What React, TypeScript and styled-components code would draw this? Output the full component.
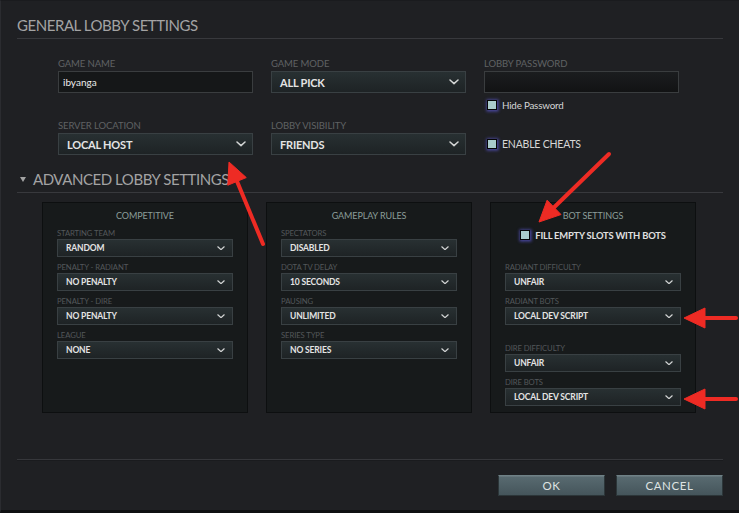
import * as React from "react";
import styled, { createGlobalStyle } from "styled-components";

const appFont = `Lato, "Noto Sans", "DejaVu Sans", sans-serif`;

const Colors = {
  Page: "#1f2023",
  Line: "#38393d",
  Heading: "#a3a3a3",
  Label: "#5f6264",
  PanelLabel: "#53575a",
  PanelTitle: "#8b9d99",
  PanelBg: "#171a1b",
  PanelBorder: "#0d0f10",
  Text: "#e4e4e4",
  Arrow: "#ee2b24",
};

const GlobalStyle = createGlobalStyle`
  html, body {
    margin: 0;
    padding: 0;
    background: ${Colors.Page};
  }
  * {
    box-sizing: border-box;
  }
`;

const Frame = styled.div`
  position: relative;
  width: 739px;
  height: 513px;
  overflow: hidden;
  background: ${Colors.Page};
  border-left: 1px solid #2b2c30;
  border-top: 1px solid #1a1b1e;
  border-bottom: 3px solid #0f1012;
  padding: 0 16px 0 16px;
  font-family: ${appFont};
  color: ${Colors.Text};
`;

const SectionHeader = styled.div<{ $top: number }>`
  display: flex;
  align-items: center;
  margin-top: ${({ $top }) => $top}px;
  height: 28px;
  font-size: 15px;
  letter-spacing: -0.45px;
  color: ${Colors.Heading};
  border-bottom: 1px solid ${Colors.Line};
  white-space: nowrap;
`;

const Triangle = styled.span`
  width: 0;
  height: 0;
  margin: 1px 7px 0 3px;
  border-left: 3.5px solid transparent;
  border-right: 3.5px solid transparent;
  border-top: 5px solid ${Colors.Heading};
`;

const GeneralGrid = styled.div`
  display: grid;
  grid-template-columns: repeat(3, 195px);
  column-gap: 18px;
  margin-top: 19px;
  padding-left: 41px;
`;

const FieldColumn = styled.div`
  display: flex;
  flex-direction: column;
`;

const Field = styled.div<{ $top?: number }>`
  display: flex;
  flex-direction: column;
  margin-top: ${({ $top }) => $top || 0}px;
`;

const FieldLabel = styled.label`
  font-size: 9.5px;
  line-height: 12px;
  height: 12px;
  margin-bottom: 1px;
  color: ${Colors.Label};
  letter-spacing: -0.1px;
  text-transform: uppercase;
  white-space: nowrap;
`;

const TextInput = styled.div<{ $shaded?: boolean }>`
  height: 22px;
  padding: 0 4px;
  display: flex;
  align-items: center;
  font-size: 10px;
  color: #ececec;
  border: 1px solid #3a3d3f;
  background: ${({ $shaded }) =>
    $shaded ? "linear-gradient(#1b1d1f, #121314)" : "#151718"};
`;

const SelectBox = styled.div<{ $compact?: boolean }>`
  display: flex;
  align-items: center;
  justify-content: space-between;
  height: ${({ $compact }) => ($compact ? 18 : 22)}px;
  padding: ${({ $compact }) => ($compact ? "0 7px 0 8px" : "0 6px 0 8px")};
  border: 1px solid #394043;
  background: linear-gradient(#283032, #1e2325);
  font-size: ${({ $compact }) => ($compact ? 8.5 : 11)}px;
  font-weight: 700;
  letter-spacing: ${({ $compact }) => ($compact ? -0.15 : -0.2)}px;
  color: ${Colors.Text};
  white-space: nowrap;
`;

const Chevron = ({ width }: { width: number }) => (
  <svg width={width} height={width * 0.55} viewBox="0 0 10 5.5">
    <polyline
      points="1,1 5,4.6 9,1"
      fill="none"
      stroke="#d4d6d6"
      strokeWidth="1.5"
      strokeLinecap="round"
      strokeLinejoin="round"
    />
  </svg>
);

const Select = ({ value, compact }: { value: string; compact?: boolean }) => (
  <SelectBox $compact={compact}>
    <span>{value}</span>
    <Chevron width={compact ? 8 : 10} />
  </SelectBox>
);

const CheckRow = styled.div<{ $top: number; $height: number; $center?: boolean }>`
  display: flex;
  align-items: center;
  justify-content: ${({ $center }) => ($center ? "center" : "flex-start")};
  margin-top: ${({ $top }) => $top}px;
  height: ${({ $height }) => $height}px;
  padding-left: ${({ $center }) => ($center ? 0 : 3)}px;
  gap: 5px;
  white-space: nowrap;
`;

const CheckBox = styled.span`
  width: 10px;
  height: 10px;
  flex: none;
  background: #a9cbcb;
  border: 1.5px solid #050506;
  box-shadow: 0 0 3px 1.5px rgba(92, 88, 210, 0.75);
`;

const CheckText = styled.span<{ $bold?: boolean; $size: number }>`
  font-size: ${({ $size }) => $size}px;
  font-weight: ${({ $bold }) => ($bold ? 700 : 400)};
  letter-spacing: -0.2px;
  color: ${({ $bold }) => ($bold ? "#e0e0e0" : "#d6d6d6")};
`;

const PanelsRow = styled.div`
  display: grid;
  grid-template-columns: repeat(3, 206px);
  column-gap: 18px;
  margin-top: 9px;
  padding-left: 25px;
`;

const Panel = styled.section`
  display: flex;
  flex-direction: column;
  height: 211px;
  padding: 7px 14px 0;
  background: ${Colors.PanelBg};
  border: 1px solid ${Colors.PanelBorder};
`;

const PanelTitle = styled.h3`
  margin: 0 0 6px;
  font-size: 9px;
  line-height: 12px;
  font-weight: 400;
  text-align: center;
  letter-spacing: -0.1px;
  color: ${Colors.PanelTitle};
`;

const PanelField = styled.div<{ $top?: number }>`
  display: flex;
  flex-direction: column;
  margin-top: ${({ $top }) => ($top === undefined ? 5 : $top)}px;
`;

const PanelLabel = styled.span`
  font-size: 7.7px;
  line-height: 10px;
  height: 10px;
  margin-bottom: 1px;
  letter-spacing: -0.1px;
  color: ${Colors.PanelLabel};
  white-space: nowrap;
`;

const Divider = styled.div`
  margin-top: 46px;
  height: 2px;
  border-top: 1px solid #36373b;
  border-bottom: 1px solid #1a1b1e;
`;

const Footer = styled.div`
  display: flex;
  justify-content: flex-end;
  gap: 11px;
  margin-top: 14px;
`;

const Button = styled.button`
  width: 107px;
  height: 21px;
  padding: 0;
  font-family: ${appFont};
  font-size: 11.5px;
  letter-spacing: 0.6px;
  color: #dfe3e3;
  background: linear-gradient(#596b71, #45555b);
  border: 1px solid #2c3639;
  border-top-color: #6f8186;
  box-shadow: inset 0 1px 0 rgba(255, 255, 255, 0.08);
`;

const Annotations = styled.svg`
  position: absolute;
  left: 0;
  top: 0;
  pointer-events: none;
`;

type ArrowSpec = { tail: [number, number]; tip: [number, number] };

const arrows: ArrowSpec[] = [
  { tail: [262, 243], tip: [228, 161] },
  { tail: [608, 153], tip: [538, 221] },
  { tail: [735, 317], tip: [683, 317] },
  { tail: [735, 398], tip: [683, 398] },
];

const Arrow = ({ tail, tip }: ArrowSpec) => {
  const dx = tip[0] - tail[0];
  const dy = tip[1] - tail[1];
  const len = Math.hypot(dx, dy);
  const ux = dx / len;
  const uy = dy / len;
  const head = 21;
  const half = 10;
  const bx = tip[0] - ux * head;
  const by = tip[1] - uy * head;
  const p1 = `${bx - uy * half},${by + ux * half}`;
  const p2 = `${bx + uy * half},${by - ux * half}`;
  return (
    <g fill={Colors.Arrow} stroke={Colors.Arrow}>
      <line
        x1={tail[0]}
        y1={tail[1]}
        x2={bx + ux * 2}
        y2={by + uy * 2}
        strokeWidth={4}
        strokeLinecap="round"
      />
      <polygon points={`${tip[0]},${tip[1]} ${p1} ${p2}`} strokeWidth={1} strokeLinejoin="round" />
    </g>
  );
};

const competitive = [
  ["STARTING TEAM", "RANDOM"],
  ["PENALTY - RADIANT", "NO PENALTY"],
  ["PENALTY - DIRE", "NO PENALTY"],
  ["LEAGUE", "NONE"],
];

const gameplay = [
  ["SPECTATORS", "DISABLED"],
  ["DOTA TV DELAY", "10 SECONDS"],
  ["PAUSING", "UNLIMITED"],
  ["SERIES TYPE", "NO SERIES"],
];

const bots: [string, string, number | undefined][] = [
  ["RADIANT DIFFICULTY", "UNFAIR", 20],
  ["RADIANT BOTS", "LOCAL DEV SCRIPT", undefined],
  ["DIRE DIFFICULTY", "UNFAIR", 18],
  ["DIRE BOTS", "LOCAL DEV SCRIPT", undefined],
];

const App: React.FC = () => (
  <>
    <GlobalStyle />
    <Frame>
      <SectionHeader $top={10}>GENERAL LOBBY SETTINGS</SectionHeader>

      <GeneralGrid>
        <FieldColumn>
          <Field>
            <FieldLabel>Game Name</FieldLabel>
            <TextInput>ibyanga</TextInput>
          </Field>
          <Field $top={27}>
            <FieldLabel>Server Location</FieldLabel>
            <Select value="LOCAL HOST" />
          </Field>
        </FieldColumn>
        <FieldColumn>
          <Field>
            <FieldLabel>Game Mode</FieldLabel>
            <Select value="ALL PICK" />
          </Field>
          <Field $top={27}>
            <FieldLabel>Lobby Visibility</FieldLabel>
            <Select value="FRIENDS" />
          </Field>
        </FieldColumn>
        <FieldColumn>
          <Field>
            <FieldLabel>Lobby Password</FieldLabel>
            <TextInput $shaded />
          </Field>
          <CheckRow $top={5} $height={14}>
            <CheckBox />
            <CheckText $size={9.8}>Hide Password</CheckText>
          </CheckRow>
          <CheckRow $top={21} $height={22}>
            <CheckBox />
            <CheckText $size={10.5}>ENABLE CHEATS</CheckText>
          </CheckRow>
        </FieldColumn>
      </GeneralGrid>

      <SectionHeader $top={10}>
        <Triangle />
        ADVANCED LOBBY SETTINGS
      </SectionHeader>

      <PanelsRow>
        <Panel>
          <PanelTitle>COMPETITIVE</PanelTitle>
          {competitive.map(([label, value], i) => (
            <PanelField key={label} $top={i === 0 ? 0 : undefined}>
              <PanelLabel>{label}</PanelLabel>
              <Select compact value={value} />
            </PanelField>
          ))}
        </Panel>
        <Panel>
          <PanelTitle>GAMEPLAY RULES</PanelTitle>
          {gameplay.map(([label, value], i) => (
            <PanelField key={label} $top={i === 0 ? 0 : undefined}>
              <PanelLabel>{label}</PanelLabel>
              <Select compact value={value} />
            </PanelField>
          ))}
        </Panel>
        <Panel>
          <PanelTitle>BOT SETTINGS</PanelTitle>
          <CheckRow $top={0} $height={14} $center>
            <CheckBox />
            <CheckText $size={9.4} $bold>
              FILL EMPTY SLOTS WITH BOTS
            </CheckText>
          </CheckRow>
          {bots.map(([label, value, top]) => (
            <PanelField key={label} $top={top}>
              <PanelLabel>{label}</PanelLabel>
              <Select compact value={value} />
            </PanelField>
          ))}
        </Panel>
      </PanelsRow>

      <Divider />
      <Footer>
        <Button>OK</Button>
        <Button>CANCEL</Button>
      </Footer>

      <Annotations width={739} height={513}>
        {arrows.map((a, i) => (
          <Arrow key={i} {...a} />
        ))}
      </Annotations>
    </Frame>
  </>
);

export default App;
